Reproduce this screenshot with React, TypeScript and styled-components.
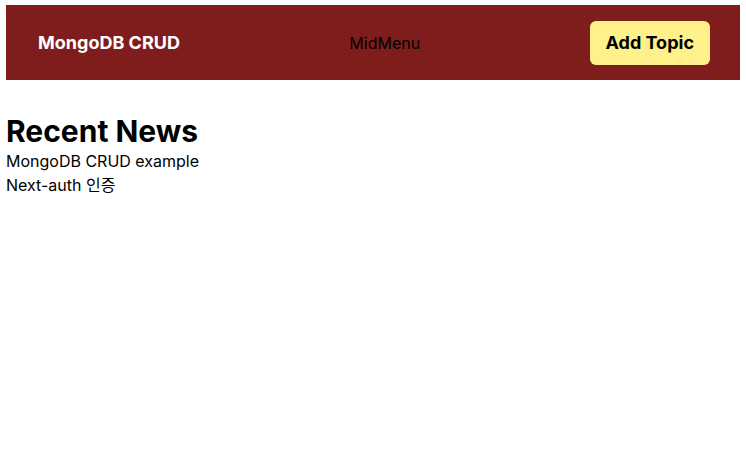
import React from "react";
import styled, { createGlobalStyle } from "styled-components";

const GlobalStyle = createGlobalStyle`
  body {
    margin: 0;
    font-family: Inter, "Noto Sans CJK KR", sans-serif;
    background: #ffffff;
    color: #000000;
  }
`;

const Page = styled.div`
  padding: 5px 6px;
`;

const Nav = styled.nav`
  display: flex;
  align-items: center;
  justify-content: space-between;
  background-color: #7f1d1d;
  padding: 16px 30px 15px 32px;
`;

const Brand = styled.a`
  color: #ffffff;
  font-weight: 700;
  font-size: 18px;
  line-height: 28px;
  text-decoration: none;
`;

const MidMenu = styled.div`
  font-size: 16px;
  line-height: 24px;
`;

const AddButton = styled.a`
  background-color: #fef08a;
  color: #000000;
  font-weight: 700;
  font-size: 18px;
  line-height: 28px;
  padding: 8px 16px;
  border-radius: 6px;
  text-decoration: none;
`;

const Main = styled.main`
  margin-top: 33px;
`;

const Title = styled.h1`
  margin: 0;
  font-size: 30px;
  line-height: 36px;
  font-weight: 700;
`;

const Item = styled.div`
  font-size: 16px;
  line-height: 24px;
`;

const news = ["MongoDB CRUD example", "Next-auth 인증"];

export default function App() {
  return (
    <>
      <GlobalStyle />
      <Page>
        <Nav>
          <Brand href="#">MongoDB CRUD</Brand>
          <MidMenu>MidMenu</MidMenu>
          <AddButton href="#">Add Topic</AddButton>
        </Nav>
        <Main>
          <Title>Recent News</Title>
          {news.map((n) => (
            <Item key={n}>{n}</Item>
          ))}
        </Main>
      </Page>
    </>
  );
}
